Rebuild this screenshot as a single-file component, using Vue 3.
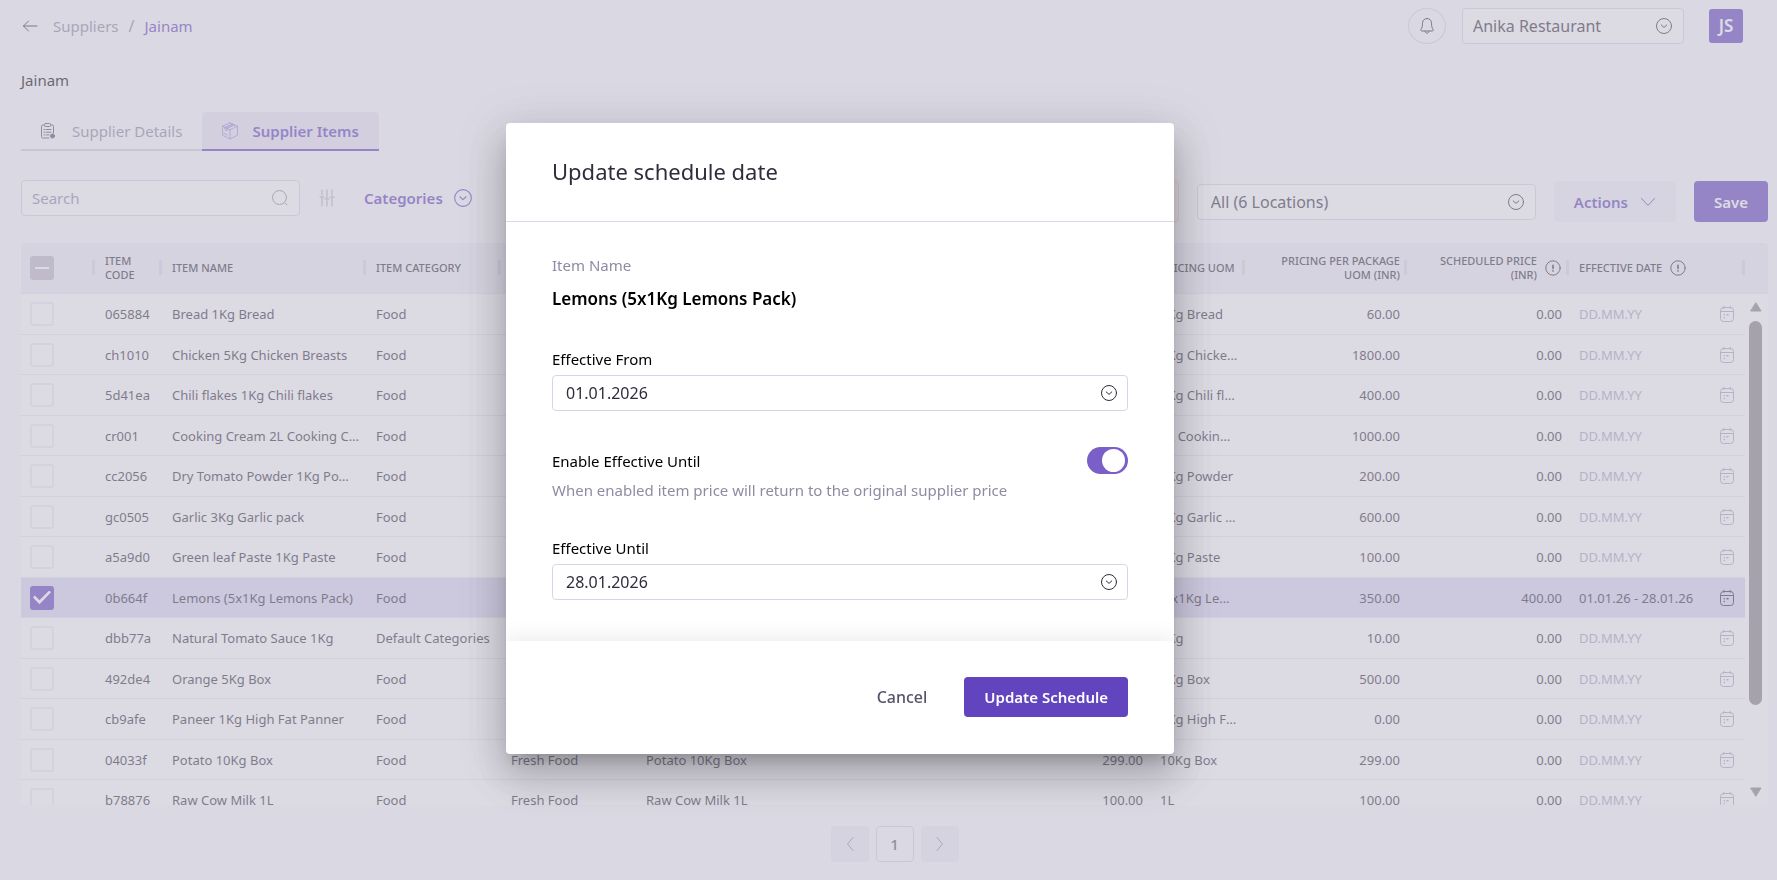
<script setup>
import { ref, reactive, computed } from "vue";

const restaurant = ref("Anika Restaurant");
const location = ref("All (6 Locations)");
const search = ref("");

const modalOpen = ref(true);
const form = reactive({
  from: "01.01.2026",
  until: "28.01.2026",
  untilEnabled: true,
});

const items = ref([
  { code: "065884", name: "Bread 1Kg Bread", category: "Food", sub: "Bakery", pack: "Bread 1Kg Bread", price: "60.00", uom: "1Kg Bread", perUom: "60.00" },
  { code: "ch1010", name: "Chicken 5Kg Chicken Breasts", category: "Food", sub: "Fresh Food", pack: "Chicken 5Kg Chicken Breasts", price: "1800.00", uom: "5Kg Chicken Breasts", perUom: "1800.00" },
  { code: "5d41ea", name: "Chili flakes 1Kg Chili flakes", category: "Food", sub: "Dry Food", pack: "Chili flakes 1Kg Chili flakes", price: "400.00", uom: "1Kg Chili flakes", perUom: "400.00" },
  { code: "cr001", name: "Cooking Cream 2L Cooking Cream", category: "Food", sub: "Dairy", pack: "Cooking Cream 2L", price: "1000.00", uom: "2L Cooking Cream", perUom: "1000.00" },
  { code: "cc2056", name: "Dry Tomato Powder 1Kg Powder", category: "Food", sub: "Dry Food", pack: "Dry Tomato Powder 1Kg", price: "200.00", uom: "1Kg Powder", perUom: "200.00" },
  { code: "gc0505", name: "Garlic 3Kg Garlic pack", category: "Food", sub: "Fresh Food", pack: "Garlic 3Kg Garlic pack", price: "600.00", uom: "3Kg Garlic pack", perUom: "600.00" },
  { code: "a5a9d0", name: "Green leaf Paste 1Kg Paste", category: "Food", sub: "Fresh Food", pack: "Green leaf Paste 1Kg", price: "100.00", uom: "1Kg Paste", perUom: "100.00" },
  { code: "0b664f", name: "Lemons (5x1Kg Lemons Pack)", category: "Food", sub: "Fresh Food", pack: "Lemons 5x1Kg", price: "350.00", uom: "(5x1Kg Lemons Pack)", perUom: "350.00", scheduled: "400.00", dates: "01.01.26 - 28.01.26", checked: true },
  { code: "dbb77a", name: "Natural Tomato Sauce 1Kg", category: "Default Categories", sub: "Food", pack: "Natural Tomato Sauce 1Kg", price: "10.00", uom: "1Kg", perUom: "10.00" },
  { code: "492de4", name: "Orange 5Kg Box", category: "Food", sub: "Fresh Food", pack: "Orange 5Kg Box", price: "500.00", uom: "5Kg Box", perUom: "500.00" },
  { code: "cb9afe", name: "Paneer 1Kg High Fat Panner", category: "Food", sub: "Dairy", pack: "Paneer 1Kg", price: "0.00", uom: "1Kg High Fat Panner", perUom: "0.00" },
  { code: "04033f", name: "Potato 10Kg Box", category: "Food", sub: "Fresh Food", pack: "Potato 10Kg Box", price: "299.00", uom: "10Kg Box", perUom: "299.00" },
  { code: "b78876", name: "Raw Cow Milk 1L", category: "Food", sub: "Fresh Food", pack: "Raw Cow Milk 1L", price: "100.00", uom: "1L", perUom: "100.00" },
]);

const selected = computed(() => items.value.find((i) => i.checked));
const closeModal = () => {
  modalOpen.value = false;
};
</script>

<template>
  <svg class="sprite" aria-hidden="true">
    <symbol id="i-drop" viewBox="0 0 18 18">
      <circle cx="9" cy="9" r="7.5" />
      <path d="M6.2 7.9 9 10.4l2.8-2.5" />
    </symbol>
    <symbol id="i-info" viewBox="0 0 18 18">
      <circle cx="9" cy="9" r="7.2" />
      <path d="M9 6.200v3.200M9 11.800v.3" stroke-width="1.6" />
    </symbol>
    <symbol id="i-calendar" viewBox="0 0 16 18">
      <rect x="1.500" y="2.500" width="13" height="14" rx="3" />
      <path d="M1.500 6.500h13M4.800 1.300v2M11.200 1.300v2" />
      <path d="M5.200 9.800h.1M8 9.800h1M5.200 12.600h.1" stroke-width="1.5" />
    </symbol>
  </svg>

  <div class="page">
    <header class="topbar">
      <button class="back" type="button" aria-label="Back">
        <svg width="16" height="14" viewBox="0 0 16 14">
          <path d="M15 7H1.5M6.5 2l-5 5 5 5" />
        </svg>
      </button>
      <nav class="crumbs">
        <a href="#">Suppliers</a>
        <span>/</span>
        <a href="#" class="current">Jainam</a>
      </nav>
      <button class="bell" type="button" aria-label="Notifications">
        <svg width="16" height="18" viewBox="0 0 16 18">
          <path d="M8 1.5C5.200 1.500 3.500 3.600 3.500 6.200c0 3.400-.5 4.600-1.500 6-.6.9-.3 1.800.8 1.800h10.400c1.100 0 1.400-.9.8-1.800-1-1.400-1.500-2.600-1.500-6C12.500 3.600 10.800 1.500 8 1.500Z" />
          <path d="M6 14.200c.2 1.300 1 2 2 2s1.800-.7 2-2" />
        </svg>
      </button>
      <div class="select restaurant">
        <select v-model="restaurant" aria-label="Restaurant">
          <option>Anika Restaurant</option>
        </select>
        <svg class="icon"><use href="#i-drop" /></svg>
      </div>
      <button class="avatar" type="button">JS</button>
    </header>

    <h1 class="title">Jainam</h1>

    <nav class="tabs">
      <a href="#" class="tab">
        <svg class="tab-icon" width="16" height="18" viewBox="0 0 16 18">
          <path d="M4.500 3H2.800C2 3 1.500 3.500 1.500 4.300v10.400c0 .8.5 1.300 1.300 1.300H9M10.500 3h1.700c.8 0 1.300.5 1.300 1.300V11" />
          <rect x="4.500" y="1.500" width="6" height="3" rx="1" />
          <path d="M4 7.500h1M6.500 7.500h4.500M4 10.200h1M6.500 10.200h4.500M4 12.900h1M6.500 12.900h2.500" />
          <circle class="dot" cx="12.500" cy="14" r="2" />
        </svg>
        Supplier Details
      </a>
      <a href="#" class="tab active">
        <svg class="tab-icon box" width="18" height="18" viewBox="0 0 18 18">
          <path d="M9 1 1.500 4.200v9L9 17l7.500-3.800v-9L9 1ZM1.500 4.200 9 7.800l7.500-3.600M9 7.800V17M4 5.400l7.400-3.400M6 6.400l7.600-3.400M4 5.400v2.400l2 .9V6.400M5 5.900l7.500-3.400M3 11.500l3 1.500" />
        </svg>
        Supplier Items
      </a>
    </nav>

    <div class="toolbar">
      <div class="filters">
        <div class="search">
          <input v-model="search" type="text" placeholder="Search" aria-label="Search" />
          <svg width="18" height="18" viewBox="0 0 18 18">
            <circle cx="8.500" cy="8.500" r="7" />
            <path d="m13.800 13.800 2.200 2.200" />
          </svg>
        </div>
        <button class="plain" type="button" aria-label="Filters">
          <svg width="16" height="18" viewBox="0 0 16 18">
            <path d="M3 1v5M3 8.500V17M8 1v8M8 11.500V17M13 1v5M13 8.500V17M1 8h4M6 10h4M11 8h4" />
          </svg>
        </button>
        <button class="categories" type="button">
          Categories
          <svg class="icon big"><use href="#i-drop" /></svg>
        </button>
      </div>
      <div class="actions">
        <button class="notice" type="button" aria-label="Scheduled prices"></button>
        <div class="select locations">
          <select v-model="location" aria-label="Locations">
            <option>All (6 Locations)</option>
          </select>
          <svg class="icon"><use href="#i-drop" /></svg>
        </div>
        <button class="btn soft" type="button">
          Actions
          <svg width="16" height="10" viewBox="0 0 16 10"><path d="m1.500 1.500 6.500 7 6.500-7" /></svg>
        </button>
        <button class="btn" type="button">Save</button>
      </div>
    </div>

    <div class="table-wrap">
      <table>
        <colgroup>
          <col class="c-check" />
          <col class="c-code" />
          <col class="c-name" />
          <col class="c-cat" />
          <col class="c-cat" />
          <col />
          <col class="c-cat" />
          <col class="c-uom" />
          <col class="c-price" />
          <col class="c-price" />
          <col class="c-date" />
          <col class="c-end" />
        </colgroup>
        <thead>
          <tr>
            <th class="check">
              <input type="checkbox" class="partial" aria-label="Select all items" />
            </th>
            <th>ITEM CODE</th>
            <th>ITEM NAME</th>
            <th>ITEM CATEGORY</th>
            <th>SUBCATEGORY</th>
            <th>PACKAGE NAME</th>
            <th class="num">PRICE (INR)</th>
            <th>PRICING UOM</th>
            <th class="num">PRICING PER PACKAGE UOM (INR)</th>
            <th class="num">
              <div class="with-icon">
                <span>SCHEDULED PRICE (INR)</span>
                <svg class="icon"><use href="#i-info" /></svg>
              </div>
            </th>
            <th>
              <div class="with-icon">
                <span>EFFECTIVE DATE</span>
                <svg class="icon"><use href="#i-info" /></svg>
              </div>
            </th>
            <th class="end"></th>
          </tr>
        </thead>
        <tbody>
          <tr v-for="item in items" :key="item.code" :class="{ selected: item.checked }">
            <td class="check">
              <input v-model="item.checked" type="checkbox" :aria-label="item.name" />
            </td>
            <td>{{ item.code }}</td>
            <td>{{ item.name }}</td>
            <td>{{ item.category }}</td>
            <td>{{ item.sub }}</td>
            <td>{{ item.pack }}</td>
            <td class="num">{{ item.price }}</td>
            <td>{{ item.uom }}</td>
            <td class="num">{{ item.perUom }}</td>
            <td class="num">{{ item.scheduled || "0.00" }}</td>
            <td>
              <div class="date" :class="{ empty: !item.dates }">
                {{ item.dates || "DD.MM.YY" }}
                <svg class="calendar"><use href="#i-calendar" /></svg>
              </div>
            </td>
            <td class="end"></td>
          </tr>
        </tbody>
      </table>
      <div class="scrollbar">
        <svg width="12" height="10" viewBox="0 0 12 10"><path d="M6 1 11 9H1Z" /></svg>
        <div class="track"><div class="thumb"></div></div>
        <svg width="12" height="10" viewBox="0 0 12 10"><path d="M1 1h10L6 9Z" /></svg>
      </div>
    </div>

    <nav class="pager">
      <button type="button" aria-label="Previous page">
        <svg width="8" height="16" viewBox="0 0 8 16"><path d="M7 1.500 1.500 8 7 14.500" /></svg>
      </button>
      <button type="button" class="on">1</button>
      <button type="button" aria-label="Next page">
        <svg width="8" height="16" viewBox="0 0 8 16"><path d="M1 1.500 6.500 8 1 14.500" /></svg>
      </button>
    </nav>
  </div>

  <div v-if="modalOpen" class="overlay" @click.self="closeModal">
    <div class="modal" role="dialog" aria-labelledby="modal-title">
      <div class="modal-head">
        <h2 id="modal-title">Update schedule date</h2>
      </div>
      <div class="modal-body">
        <div class="hint">Item Name</div>
        <div class="item-name">{{ selected?.name }}</div>

        <label for="from">Effective From</label>
        <div class="field">
          <input id="from" v-model="form.from" type="text" />
          <svg class="icon"><use href="#i-drop" /></svg>
        </div>

        <div class="switch-row">
          <label for="enable">Enable Effective Until</label>
          <input id="enable" v-model="form.untilEnabled" class="switch" type="checkbox" role="switch" />
        </div>
        <p class="hint note">When enabled item price will return to the original supplier price</p>

        <label for="until">Effective Until</label>
        <div class="field">
          <input id="until" v-model="form.until" type="text" />
          <svg class="icon"><use href="#i-drop" /></svg>
        </div>
      </div>
      <div class="modal-foot">
        <button class="cancel" type="button" @click="closeModal">Cancel</button>
        <button class="submit" type="button" @click="closeModal">Update Schedule</button>
      </div>
    </div>
  </div>
</template>

<style>
body {
  margin: 0;
  background: #fbfafd;
}
</style>

<style scoped>
.page,
.overlay {
  font-family: "Noto Sans", "Open Sans", sans-serif;
  font-size: 15px;
  line-height: 20px;
  color: #2f2d3b;
}
.page *,
.overlay * {
  box-sizing: border-box;
}
button,
input,
select {
  font: inherit;
  color: inherit;
  margin: 0;
}
button {
  display: flex;
  align-items: center;
  justify-content: center;
  padding: 0;
  border: 0;
  background: none;
  cursor: pointer;
}
a {
  color: inherit;
  text-decoration: none;
}
svg {
  flex: none;
  fill: none;
  stroke: currentColor;
  stroke-linecap: round;
  stroke-linejoin: round;
}
.sprite {
  position: absolute;
  width: 0;
  height: 0;
}
.icon {
  width: 18px;
  height: 18px;
}
.icon.big {
  width: 20px;
  height: 20px;
}
.page {
  display: flex;
  flex-direction: column;
  height: 100vh;
  box-sizing: border-box;
  padding: 8px 9px 18px 21px;
}

/* top bar */
.topbar {
  display: flex;
  align-items: center;
  height: 36px;
  padding-right: 25px;
}
.back {
  width: 18px;
  margin-right: 14px;
}
.crumbs {
  display: flex;
  align-items: center;
  gap: 10px;
  margin-right: auto;
  color: #8f8ba3;
}
.crumbs span {
  font-size: 16px;
}
.crumbs .current {
  color: #6244bf;
}
.bell {
  width: 38px;
  height: 36px;
  margin-right: 16px;
  border: 1px solid #d8d6e6;
  border-radius: 50%;
}
.select {
  position: relative;
  height: 36px;
}
.select select {
  width: 100%;
  height: 100%;
  padding: 0 40px 0 13px;
  border: 1px solid #d8d6e6;
  border-radius: 4px;
  background: #fff;
  font-size: 16px;
  appearance: none;
}
.select .icon {
  position: absolute;
  right: 11px;
  top: 9px;
  pointer-events: none;
}
.restaurant {
  width: 222px;
  margin-right: 25px;
}
.restaurant select {
  padding-left: 10px;
}
.avatar {
  width: 34px;
  height: 34px;
  border-radius: 3px;
  background: #6244bf;
  color: #fff;
  font-size: 17px;
  font-weight: 600;
}
.title {
  margin: 26px 0 22px;
  font-size: 15px;
  font-weight: 400;
  line-height: 20px;
  color: #000;
}

/* tabs */
.tabs {
  display: flex;
}
.tab {
  display: flex;
  align-items: center;
  height: 39px;
  padding: 0 20px 0 19px;
  border-bottom: 2px solid #d8d6e0;
  color: #8f8ba3;
}
.tab-icon {
  margin-right: 16px;
  color: #55536a;
}
.tab-icon .dot {
  fill: currentColor;
}
.tab.active {
  border-color: #6244bf;
  border-radius: 4px 4px 0 0;
  background: #ebe7f7;
  color: #6244bf;
  font-weight: 600;
}
.tab-icon.box {
  margin-right: 13px;
  color: #8d76d2;
  stroke-width: 0.7;
}

/* toolbar */
.toolbar {
  display: flex;
  justify-content: space-between;
  align-items: flex-start;
  margin: 29px 0 20px;
}
.filters,
.actions {
  display: flex;
  align-items: center;
}
.search {
  display: flex;
  align-items: center;
  width: 279px;
  height: 36px;
  padding: 0 10px;
  border: 1px solid #d8d6e6;
  border-radius: 4px;
  background: #fff;
  color: #8f8ba3;
}
.search input {
  flex: 1;
  min-width: 0;
  padding: 0;
  border: 0;
  background: none;
}
.search input::placeholder {
  color: #8f8ba3;
  opacity: 1;
}
.plain {
  margin: 0 29px 0 19px;
  color: #a9a6ba;
}
.categories {
  gap: 10px;
  color: #6244bf;
  font-weight: 600;
}
.actions {
  height: 43px;
}
.notice {
  width: 200px;
  height: 43px;
  margin-right: 18px;
  border: 1px solid #f3d9c8;
  border-radius: 4px;
  background: #fbf0ea;
}
.locations {
  width: 339px;
  margin-right: 18px;
}
.btn {
  height: 41px;
  padding: 0 20px;
  border-radius: 4px;
  background: #6244bf;
  color: #fff;
  font-weight: 600;
}
.btn.soft {
  gap: 12px;
  margin-right: 18px;
  background: #f2f1f8;
  color: #6244bf;
}

/* items table */
.table-wrap {
  position: relative;
  flex: 1;
  min-height: 0;
  overflow: hidden;
}
table {
  width: 100%;
  border-spacing: 0;
  table-layout: fixed;
  font-size: 13px;
}
.c-check {
  width: 74px;
}
.c-code {
  width: 67px;
}
.c-name {
  width: 204px;
}
.c-cat {
  width: 135px;
}
.c-uom {
  width: 95px;
}
.c-price {
  width: 162px;
}
.c-date {
  width: 176px;
}
.c-end {
  width: 23px;
}
th {
  position: relative;
  height: 51px;
  padding: 0 7px 0 10px;
  border-bottom: 1px solid #e9e8f2;
  background: #f1f0f8;
  font-size: 11px;
  font-weight: 500;
  line-height: 14px;
  text-align: left;
}
th:first-child {
  border-top-left-radius: 4px;
}
th:last-child {
  border-top-right-radius: 4px;
}
th:not(.end)::after {
  content: "";
  position: absolute;
  top: 17px;
  right: 0;
  width: 3px;
  height: 15px;
  background: #dcdbe6;
}
.num {
  text-align: right;
}
.with-icon {
  display: flex;
  align-items: center;
  gap: 7px;
}
.num .with-icon {
  justify-content: flex-end;
}
.num .with-icon span {
  width: 100px;
}
td {
  height: 40px;
  padding: 0 7px 0 10px;
  border-bottom: 1px solid #e9e8f2;
  background: #fff;
  overflow: hidden;
  text-overflow: ellipsis;
  white-space: nowrap;
}
tr:nth-child(odd) td {
  height: 41px;
}
.selected td:not(.end) {
  background: #dcd7f4;
}
td.end {
  border-bottom-color: #fff;
}
th.check,
td.check {
  padding: 0 9px;
}
.check input {
  position: relative;
  display: block;
  width: 24px;
  height: 24px;
  border: 2px solid #f0eef7;
  border-radius: 3px;
  background: #fff;
  appearance: none;
}
.check input:checked {
  border-color: #6244bf;
  background: #6244bf;
}
.check input:checked::after {
  content: "";
  position: absolute;
  left: 1px;
  top: 3px;
  width: 18px;
  height: 14px;
  background: #fff;
  clip-path: polygon(0 50%, 10% 36%, 36% 70%, 90% 0, 100% 13%, 36% 98%);
}
.check .partial {
  border-color: #bfbbcb;
  background: #bfbbcb;
}
.partial::after {
  content: "";
  position: absolute;
  left: 3px;
  top: 9px;
  width: 14px;
  height: 2px;
  background: #fff;
}
.date {
  display: flex;
  align-items: center;
  justify-content: space-between;
  padding-right: 3px;
}
.date.empty {
  color: #a9a6bf;
}
.calendar {
  width: 16px;
  height: 18px;
}
.scrollbar {
  position: absolute;
  top: 59px;
  right: 6px;
  bottom: 8px;
  display: flex;
  flex-direction: column;
  align-items: center;
  width: 13px;
  color: #85838a;
}
.scrollbar path {
  fill: currentColor;
}
.track {
  flex: 1;
  width: 100%;
  padding: 9px 0;
}
.thumb {
  height: 84%;
  border-radius: 7px;
  background: #85838a;
}

/* pager */
.pager {
  display: flex;
  justify-content: center;
  gap: 7px;
  margin-top: 21px;
}
.pager button {
  width: 38px;
  height: 36px;
  border-radius: 4px;
  background: #f0eff6;
  color: #8f8ba3;
}
.pager .on {
  border: 1px solid #d8d6e6;
  background: #fbfafd;
  color: #55536a;
  font-weight: 500;
}

/* modal */
.overlay {
  position: fixed;
  inset: 0;
  display: flex;
  align-items: center;
  justify-content: center;
  box-sizing: border-box;
  padding: 0 97px 3px 0;
  background: rgba(191, 188, 204, 0.55);
}
.modal {
  width: 668px;
  border-radius: 4px;
  background: #fff;
  box-shadow:
    0 11px 15px -7px rgba(0, 0, 0, 0.2),
    0 24px 38px 3px rgba(0, 0, 0, 0.14),
    0 9px 46px 8px rgba(0, 0, 0, 0.12);
  overflow: hidden;
}
.modal-head {
  padding: 33px 46px 35px;
  border-bottom: 1px solid #dad8e6;
}
.modal-head h2 {
  margin: 0;
  font-size: 22px;
  font-weight: 400;
  line-height: 30px;
}
.modal-body {
  padding: 32px 46px 41px;
}
.modal-body label {
  display: block;
  color: #000;
}
.hint {
  line-height: 22px;
  color: #8f8ba3;
}
.item-name {
  margin: 11px 0 38px;
  font-size: 17px;
  font-weight: 600;
  line-height: 24px;
  color: #000;
}
.field {
  display: flex;
  align-items: center;
  height: 36px;
  margin-top: 6px;
  padding: 0 9px 0 13px;
  border: 1px solid #d8d6e6;
  border-radius: 4px;
}
.field input {
  flex: 1;
  min-width: 0;
  padding: 0;
  border: 0;
  outline: 0;
  background: none;
  font-size: 16px;
}
.switch-row {
  display: flex;
  align-items: center;
  justify-content: space-between;
  margin-top: 36px;
}
.switch {
  width: 41px;
  height: 27px;
  padding: 2px 3px;
  border-radius: 14px;
  background: #c9c6d6;
  appearance: none;
}
.switch::before {
  content: "";
  display: block;
  width: 23px;
  height: 23px;
  border-radius: 50%;
  background: #fff;
}
.switch:checked {
  background: #7b5fc8;
}
.switch:checked::before {
  margin-left: auto;
}
.note {
  margin: 5px 0 37px;
}
.modal-foot {
  display: flex;
  align-items: center;
  justify-content: flex-end;
  gap: 37px;
  padding: 36px 46px 37px;
  box-shadow: 0 -4px 20px rgba(0, 0, 0, 0.08);
}
.cancel {
  color: #55536a;
  font-size: 16px;
  font-weight: 500;
}
.submit {
  height: 40px;
  padding: 0 20px;
  border-radius: 4px;
  background: #6244bf;
  color: #fff;
  font-weight: 600;
}
</style>
